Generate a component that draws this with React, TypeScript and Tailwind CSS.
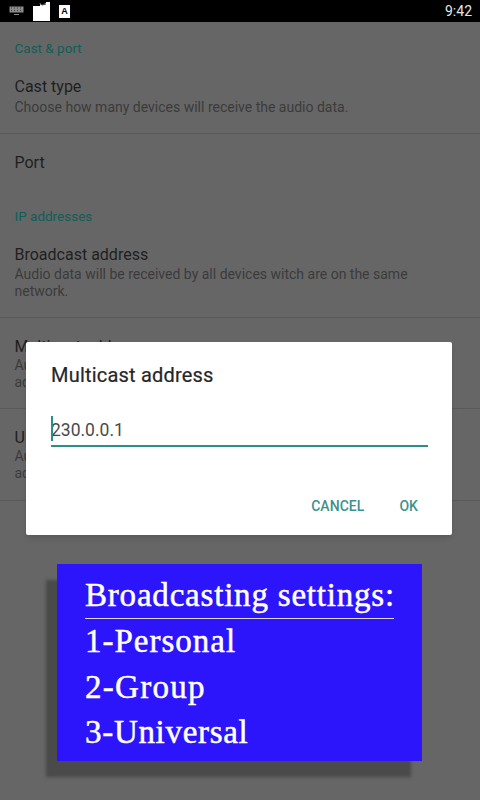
const rows = [
  { title: 'Multicast address', lines: ['Audio data will be received by all devices that are', 'added to the group.'], height: 'h-[91px]' },
  { title: 'Unicast address', lines: ['Audio data will be received by one device with this', 'address.'], height: 'h-[92px]' },
]

function SectionLabel({ children }: { children: string }) {
  return <div className="text-[13.5px] leading-[18px] text-[#0f5f58]">{children}</div>
}

function StatusBar() {
  return (
    <div className="h-[22px] bg-black flex items-center pl-[9px] pr-2">
      {/* keyboard */}
      <svg width="16" height="10" viewBox="0 0 16 10" className="mr-2">
        <rect x="0.5" y="0.5" width="14" height="6" fill="#8c8c8c" />
        <path d="M2 2h1M5 2h1M8 2h1M11 2h1M2 4.5h1M5 4.5h1M8 4.5h1M11 4.5h1" stroke="#333" strokeWidth="1" />
        <rect x="5" y="8" width="5" height="1" fill="#8c8c8c" />
      </svg>
      {/* sd card */}
      <svg width="17" height="19" viewBox="0 0 17 19" className="mr-[9px]">
        <path d="M0 4 L7 4 L7 1 L9 3 L13 1 L13 0 L17 0 L17 19 L0 19 Z" fill="#fff" />
        <path d="M6 1 L9 3 L13 2" stroke="#333" strokeWidth="1" fill="none" />
      </svg>
      {/* A badge */}
      <div className="w-[11px] h-[13px] bg-white flex items-center justify-center text-[9px] leading-none font-bold text-black font-['Liberation_Sans',sans-serif]">
        A
      </div>
      <span className="ml-auto text-[14px] leading-none text-[#e6e6e6]">9:42</span>
    </div>
  )
}

export default function App() {
  return (
    <div className="relative w-[480px] h-[800px] overflow-hidden bg-[#666666] font-['Roboto',sans-serif]">
      <StatusBar />

      <div className="px-[14.5px] pt-[17px]">
        <SectionLabel>Cast &amp; port</SectionLabel>
      </div>
      <div className="px-[14.5px] pt-[20px] h-[77px] border-b border-[#595959]">
        <div className="text-[16px] leading-[20px] text-[#1f1f1f]">Cast type</div>
        <div className="text-[14px] leading-[17px] mt-[2px] text-[#3b3b3b]">Choose how many devices will receive the audio data.</div>
      </div>
      <div className="px-[14.5px] pt-[19px] h-[57px] text-[16px] leading-[20px] text-[#1f1f1f]">Port</div>
      <div className="px-[14.5px] pt-[16px]">
        <SectionLabel>IP addresses</SectionLabel>
      </div>
      <div className="px-[14.5px] pt-[20px] h-[93px] border-b border-[#595959]">
        <div className="text-[16px] leading-[20px] text-[#1f1f1f]">Broadcast address</div>
        <div className="text-[14px] leading-[17px] mt-px text-[#3b3b3b]">
          Audio data will be received by all devices witch are on the same
          <br />
          network.
        </div>
      </div>
      {rows.map((row) => (
        <div key={row.title} className={`px-[14.5px] pt-[19px] border-b border-[#595959] ${row.height}`}>
          <div className="text-[16px] leading-[20px] text-[#1f1f1f]">{row.title}</div>
          {row.lines.map((line) => (
            <div key={line} className="text-[14px] leading-[17px] text-[#3b3b3b]">{line}</div>
          ))}
        </div>
      ))}

      {/* dialog */}
      <div className="absolute left-[26px] top-[342px] w-[426px] h-[193px] bg-white rounded-[2px] shadow-md px-[25px]">
        <div className="pt-[20px] text-[20px] leading-[26px] tracking-[0.2px] text-[#262626] [-webkit-text-stroke:0.2px_#262626]">Multicast address</div>
        <div className="relative mt-[28px] w-[377px] h-[31px] border-b-2 border-[#2b8f87] text-[17.5px] leading-[28px] text-[#4a4a4a]">
          230.0.0.1
          <div className="absolute left-0 top-0 w-[2px] h-[25px] bg-[#2b8f87]" />
        </div>
        <div className="flex justify-end gap-[35px] pr-[9px] mt-[50px] text-[14px] leading-[18px] tracking-[0.05px] font-medium text-[#3f918b]">
          <span>CANCEL</span>
          <span>OK</span>
        </div>
      </div>

      {/* promo banner */}
      <div className="absolute left-[57px] top-[564px] w-[365px] h-[197px] bg-[#2c14fb] shadow-[-11px_16px_3px_#4a4a4a] pl-[28px] pt-[11px] text-white font-['Liberation_Serif',serif] text-[33px] [-webkit-text-stroke:0.5px_#ffffff]">
        <div className="w-[309px] h-[44px] leading-[40px] border-b border-[#dcd8ff] whitespace-nowrap tracking-[0.8px]">Broadcasting settings:</div>
        <div className="h-[46px] leading-[44px] tracking-[1px]">1-Personal</div>
        <div className="h-[45px] leading-[44px] tracking-[1.3px]">2-Group</div>
        <div className="h-[45px] leading-[44px] tracking-[0.7px]">3-Universal</div>
      </div>
    </div>
  )
}
